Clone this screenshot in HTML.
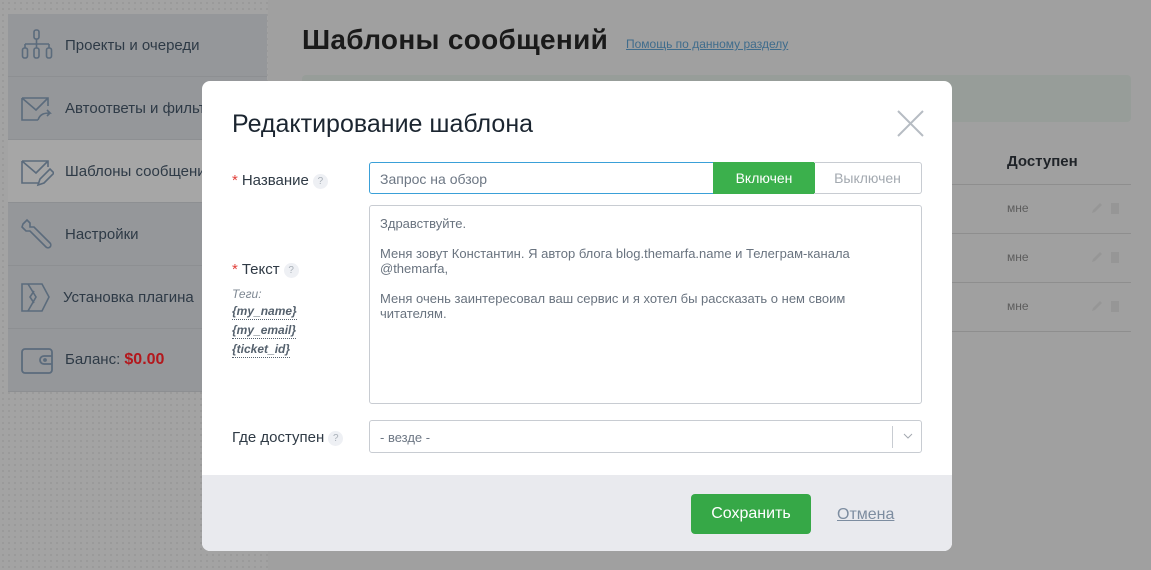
<!DOCTYPE html>
<html><head><meta charset="utf-8"><style>
*{box-sizing:border-box;margin:0;padding:0}
body{width:1151px;height:570px;overflow:hidden;position:relative;font-family:"Liberation Sans",sans-serif;background:#a0a0a0}
.left{position:absolute;left:0;top:0;width:268px;height:570px;background-color:#a3a3a3;background-image:radial-gradient(#979797 0.8px,transparent 1px);background-size:6px 6px}
.side{position:absolute;left:8px;top:14px;width:259px}
.it{height:63px;border-bottom:1px solid #8d8f92;background:#95979a;display:flex;align-items:center;color:#2e3a46;font-size:15px;position:relative}
.it.act{background:#a6a6a6}
.it svg{position:absolute;left:12px;top:15px}
.it span{position:absolute;left:57px}
h1{position:absolute;left:302px;top:24px;font-size:28px;font-weight:bold;color:#1a1a1a;letter-spacing:0.3px}
.help{position:absolute;left:626px;top:37px;font-size:12px;color:#3f6c8c;text-decoration:underline}
.banner{position:absolute;left:302px;top:75px;width:829px;height:47px;background:#979d99;border-radius:4px}
.th{position:absolute;left:1007px;top:153px;font-size:15px;font-weight:bold;color:#1f2328}
.ln{position:absolute;left:302px;width:829px;height:1px;background:#8e8e8e}
.mne{position:absolute;left:1007px;font-size:12px;color:#5d5d5d}
.ic{position:absolute;left:1091px;width:30px;height:12px}
.modal{position:absolute;left:202px;top:81px;width:750px;height:470px;background:#fff;border-radius:8px;overflow:hidden}
.mt{position:absolute;left:30px;top:29px;font-size:25px;color:#1b2530}
.lab{position:absolute;left:30px;font-size:15px;color:#2f3a45}
.lab b{color:#e2403a;font-weight:normal;margin-right:4px}
.q{display:inline-block;width:15px;height:15px;border-radius:50%;background:#eef0f4;color:#a9b0b8;font-size:10px;text-align:center;line-height:15px;margin-left:4px;vertical-align:middle}
.inp{position:absolute;left:167px;top:81px;width:345px;height:32px;border:1px solid #3aa0d8;border-radius:3px 0 0 3px;font-size:14px;color:#6d7784;padding:8px 10px}
.on{position:absolute;left:511px;top:81px;width:102px;height:32px;background:#3bb04c;color:#fff;font-size:14px;text-align:center;line-height:32px}
.off{position:absolute;left:612px;top:81px;width:108px;height:32px;border:1px solid #c8ccd2;border-left:none;border-radius:0 3px 3px 0;color:#a3a9b0;font-size:14px;text-align:center;line-height:30px}
.ta{position:absolute;left:167px;top:124px;width:553px;height:199px;border:1px solid #c8ccd2;border-radius:3px;padding:10px 10px;font-size:13px;color:#69737f;line-height:15px}
.tags{position:absolute;left:30px;top:204px;font-size:12px;font-style:italic;color:#7d8792;line-height:19px}
.tags a{display:block;color:#55616d;font-weight:bold;text-decoration:none;border-bottom:1px dotted #55616d;width:max-content;line-height:15px;margin-bottom:3px}
.sel{position:absolute;left:167px;top:339px;width:553px;height:33px;border:1px solid #c8ccd2;border-radius:3px;font-size:13px;color:#6d7784;padding:9px 10px}
.foot{position:absolute;left:0;top:394px;width:750px;height:76px;background:#e9eaee}
.save{position:absolute;left:489px;top:19px;width:120px;height:40px;background:#36a847;border-radius:4px;color:#fff;font-size:16px;text-align:center;line-height:40px}
.cancel{position:absolute;left:635px;top:31px;font-size:16px;color:#7d8da0;text-decoration:underline}
</style></head><body>
<div class="left"></div>
<div class="side">
<div class="it"><svg width="34" height="34" viewBox="0 0 34 34" fill="none" stroke="#5b6b7c" stroke-width="1.6"><rect x="14" y="1" width="5" height="9" rx="2"/><path d="M16.5 10v5M5 15h24M5 15v4M16.5 15v4M29 15v4"/><rect x="2.5" y="19" width="5" height="10" rx="2"/><rect x="14" y="19" width="5" height="10" rx="2"/><rect x="26.5" y="19" width="5" height="10" rx="2"/></svg><span>Проекты и очереди</span></div>
<div class="it"><svg width="34" height="34" viewBox="0 0 34 34" fill="none" stroke="#5b6b7c" stroke-width="1.6"><path d="M2 6h26v8M2 6v22h16M2 6l14 12 12-12"/><path d="M18 28c2-6 6-7 12-7l-3-3M30 21l-3 3"/></svg><span>Автоответы и фильтры</span></div>
<div class="it act"><svg width="34" height="34" viewBox="0 0 34 34" fill="none" stroke="#5b6b7c" stroke-width="1.6"><path d="M2 6h26v6M2 6v22h16M2 6l14 12 12-12"/><path d="M18 30l2-6 10-10 4 4-10 10z"/></svg><span>Шаблоны сообщений</span></div>
<div class="it"><svg width="34" height="34" viewBox="0 0 34 34" fill="none" stroke="#5b6b7c" stroke-width="1.6"><path d="M3 6l4-4 3 3 0 4 4 0 16 16a2 2 0 0 1-4 4L10 13 6 13 2 9z"/></svg><span>Настройки</span></div>
<div class="it"><svg width="34" height="34" viewBox="0 0 34 34" fill="none" stroke="#5b6b7c" stroke-width="1.6"><path d="M2 3h20l7 13-7 14H2z"/><path d="M14 10l-4 6 4 6M8 3l8 13-8 14"/></svg><span style="left:55px">Установка плагина</span></div>
<div class="it"><svg width="34" height="34" viewBox="0 0 34 34" fill="none" stroke="#5b6b7c" stroke-width="1.8"><rect x="2" y="5" width="30" height="24" rx="3"/><path d="M32 12h-8a3 3 0 0 0 0 8h8"/><circle cx="25" cy="16" r="1"/></svg><span>Баланс: <b style="color:#b3171c;font-size:16px">$0.00</b></span></div>
</div>
<h1>Шаблоны сообщений</h1>
<div class="help">Помощь по данному разделу</div>
<div class="banner"></div>
<div class="th">Доступен</div>
<div class="ln" style="top:184px"></div><div class="ln" style="top:233px"></div><div class="ln" style="top:282px"></div><div class="ln" style="top:331px"></div>
<div class="mne" style="top:201px">мне</div><div class="mne" style="top:250px">мне</div><div class="mne" style="top:299px">мне</div>
<svg class="ic" style="top:202px" viewBox="0 0 30 12"><path d="M1 11l1-3 7-7 2 2-7 7z" fill="#969696"/><rect x="20" y="1" width="8" height="11" fill="#969696"/></svg>
<svg class="ic" style="top:251px" viewBox="0 0 30 12"><path d="M1 11l1-3 7-7 2 2-7 7z" fill="#969696"/><rect x="20" y="1" width="8" height="11" fill="#969696"/></svg>
<svg class="ic" style="top:300px" viewBox="0 0 30 12"><path d="M1 11l1-3 7-7 2 2-7 7z" fill="#969696"/><rect x="20" y="1" width="8" height="11" fill="#969696"/></svg>
<div class="modal">
<div class="mt">Редактирование шаблона</div>
<svg style="position:absolute;left:695px;top:29px" width="27" height="27" viewBox="0 0 27 27" stroke="#b6bcc3" stroke-width="2"><path d="M1 1l25 25M26 1L1 26"/></svg>
<div class="lab" style="top:91px"><b>*</b>Название<span class="q">?</span></div>
<div class="inp">Запрос на обзор</div>
<div class="on">Включен</div>
<div class="off">Выключен</div>
<div class="lab" style="top:180px"><b>*</b>Текст<span class="q">?</span></div>
<div class="tags">Теги:<a>{my_name}</a><a>{my_email}</a><a>{ticket_id}</a></div>
<div class="ta">Здравствуйте.<br><br>Меня зовут Константин. Я автор блога blog.themarfa.name и Телеграм-канала @themarfa,<br><br>Меня очень заинтересовал ваш сервис и я хотел бы рассказать о нем своим читателям.</div>
<div class="lab" style="top:348px">Где доступен<span class="q">?</span></div>
<div class="sel">- везде -<div style="position:absolute;right:28px;top:5px;width:1px;height:22px;background:#c8ccd2"></div><svg style="position:absolute;right:8px;top:12px" width="10" height="6" viewBox="0 0 10 6" fill="none" stroke="#a3a9b0"><path d="M1 1l4 4 4-4"/></svg></div>
<div class="foot"><div class="save">Сохранить</div><div class="cancel">Отмена</div></div>
</div>
</body></html>
